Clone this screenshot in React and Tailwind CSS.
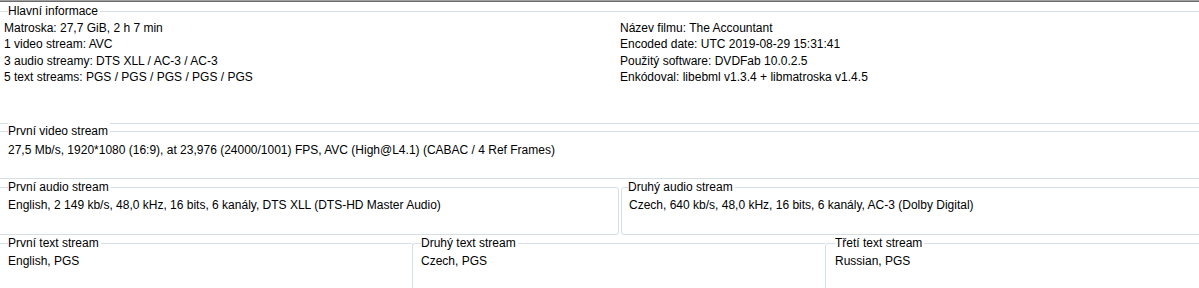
import React from 'react';

const GroupBox = ({ title, labelLeft = 6, className = '', children }) => (
    <div className={`relative border border-[#d5dfe5] rounded-[3px] ${className}`}>
        <span
            className="absolute top-[-9px] bg-white pr-[2px] leading-[16px] whitespace-nowrap"
            style={{ left: labelLeft }}
        >
            {title}
        </span>
        {children}
    </div>
);

const mainLeft = [
    'Matroska: 27,7 GiB, 2 h 7 min',
    '1 video stream: AVC',
    '3 audio streamy: DTS XLL / AC-3 / AC-3',
    '5 text streams: PGS / PGS / PGS / PGS / PGS',
];

const mainRight = [
    'Název filmu: The Accountant',
    'Encoded date: UTC 2019-08-29 15:31:41',
    'Použitý software: DVDFab 10.0.2.5',
    'Enkódoval: libebml v1.3.4 + libmatroska v1.4.5',
];

export default function App() {
    return (
        <div className="w-[1199px] h-[288px] overflow-hidden bg-white text-[12px] text-black font-['Liberation_Sans',Arial,sans-serif]">
            <div className="h-px bg-[#a0a0a0]" />
            <div className="h-px bg-[#6b6b6b]" />

            {/* Hlavní informace */}
            <GroupBox title="Hlavní informace" labelLeft={9} className="mt-[9px] -ml-[2px] w-[1210px] h-[113px]">
                <div className="grid grid-cols-[616px_1fr] pl-[5px] pt-[8px] leading-[16.3px]">
                    <div>
                        {mainLeft.map((t) => (
                            <div key={t} className="whitespace-nowrap">{t}</div>
                        ))}
                    </div>
                    <div>
                        {mainRight.map((t) => (
                            <div key={t} className="whitespace-nowrap">{t}</div>
                        ))}
                    </div>
                </div>
            </GroupBox>

            {/* Video */}
            <GroupBox title="První video stream" labelLeft={9} className="mt-[7px] -ml-[2px] w-[1210px] h-[48px]">
                <div className="pl-[9px] pt-[10px] leading-[16px] whitespace-nowrap">
                    27,5 Mb/s, 1920*1080 (16:9), at 23,976 (24000/1001) FPS, AVC (High@L4.1) (CABAC / 4 Ref Frames)
                </div>
            </GroupBox>

            {/* Audio */}
            <div className="flex mt-[8px] -ml-[2px] w-[1210px]">
                <GroupBox title="První audio stream" labelLeft={9} className="w-[621px] h-[48px]">
                    <div className="pl-[9px] pt-[9px] leading-[16px] whitespace-nowrap">
                        English, 2 149 kb/s, 48,0 kHz, 16 bits, 6 kanály, DTS XLL (DTS-HD Master Audio)
                    </div>
                </GroupBox>
                <GroupBox title="Druhý audio stream" labelLeft={6} className="ml-[2px] flex-1 h-[48px]">
                    <div className="pl-[7px] pt-[9px] leading-[16px] whitespace-nowrap">
                        Czech, 640 kb/s, 48,0 kHz, 16 bits, 6 kanály, AC-3 (Dolby Digital)
                    </div>
                </GroupBox>
            </div>

            {/* Text */}
            <div className="flex mt-[8px] -ml-[2px] w-[1210px]">
                <GroupBox title="První text stream" labelLeft={9} className="w-[414px] h-[60px] border-r-0 rounded-r-none">
                    <div className="pl-[9px] pt-[9px] leading-[16px] whitespace-nowrap">English, PGS</div>
                </GroupBox>
                <GroupBox title="Druhý text stream" labelLeft={8} className="w-[413px] h-[60px] border-r-0 rounded-r-none">
                    <div className="pl-[8px] pt-[9px] leading-[16px] whitespace-nowrap">Czech, PGS</div>
                </GroupBox>
                <GroupBox title="Třetí text stream" labelLeft={9} className="flex-1 h-[60px]">
                    <div className="pl-[9px] pt-[9px] leading-[16px] whitespace-nowrap">Russian, PGS</div>
                </GroupBox>
            </div>
        </div>
    );
}
